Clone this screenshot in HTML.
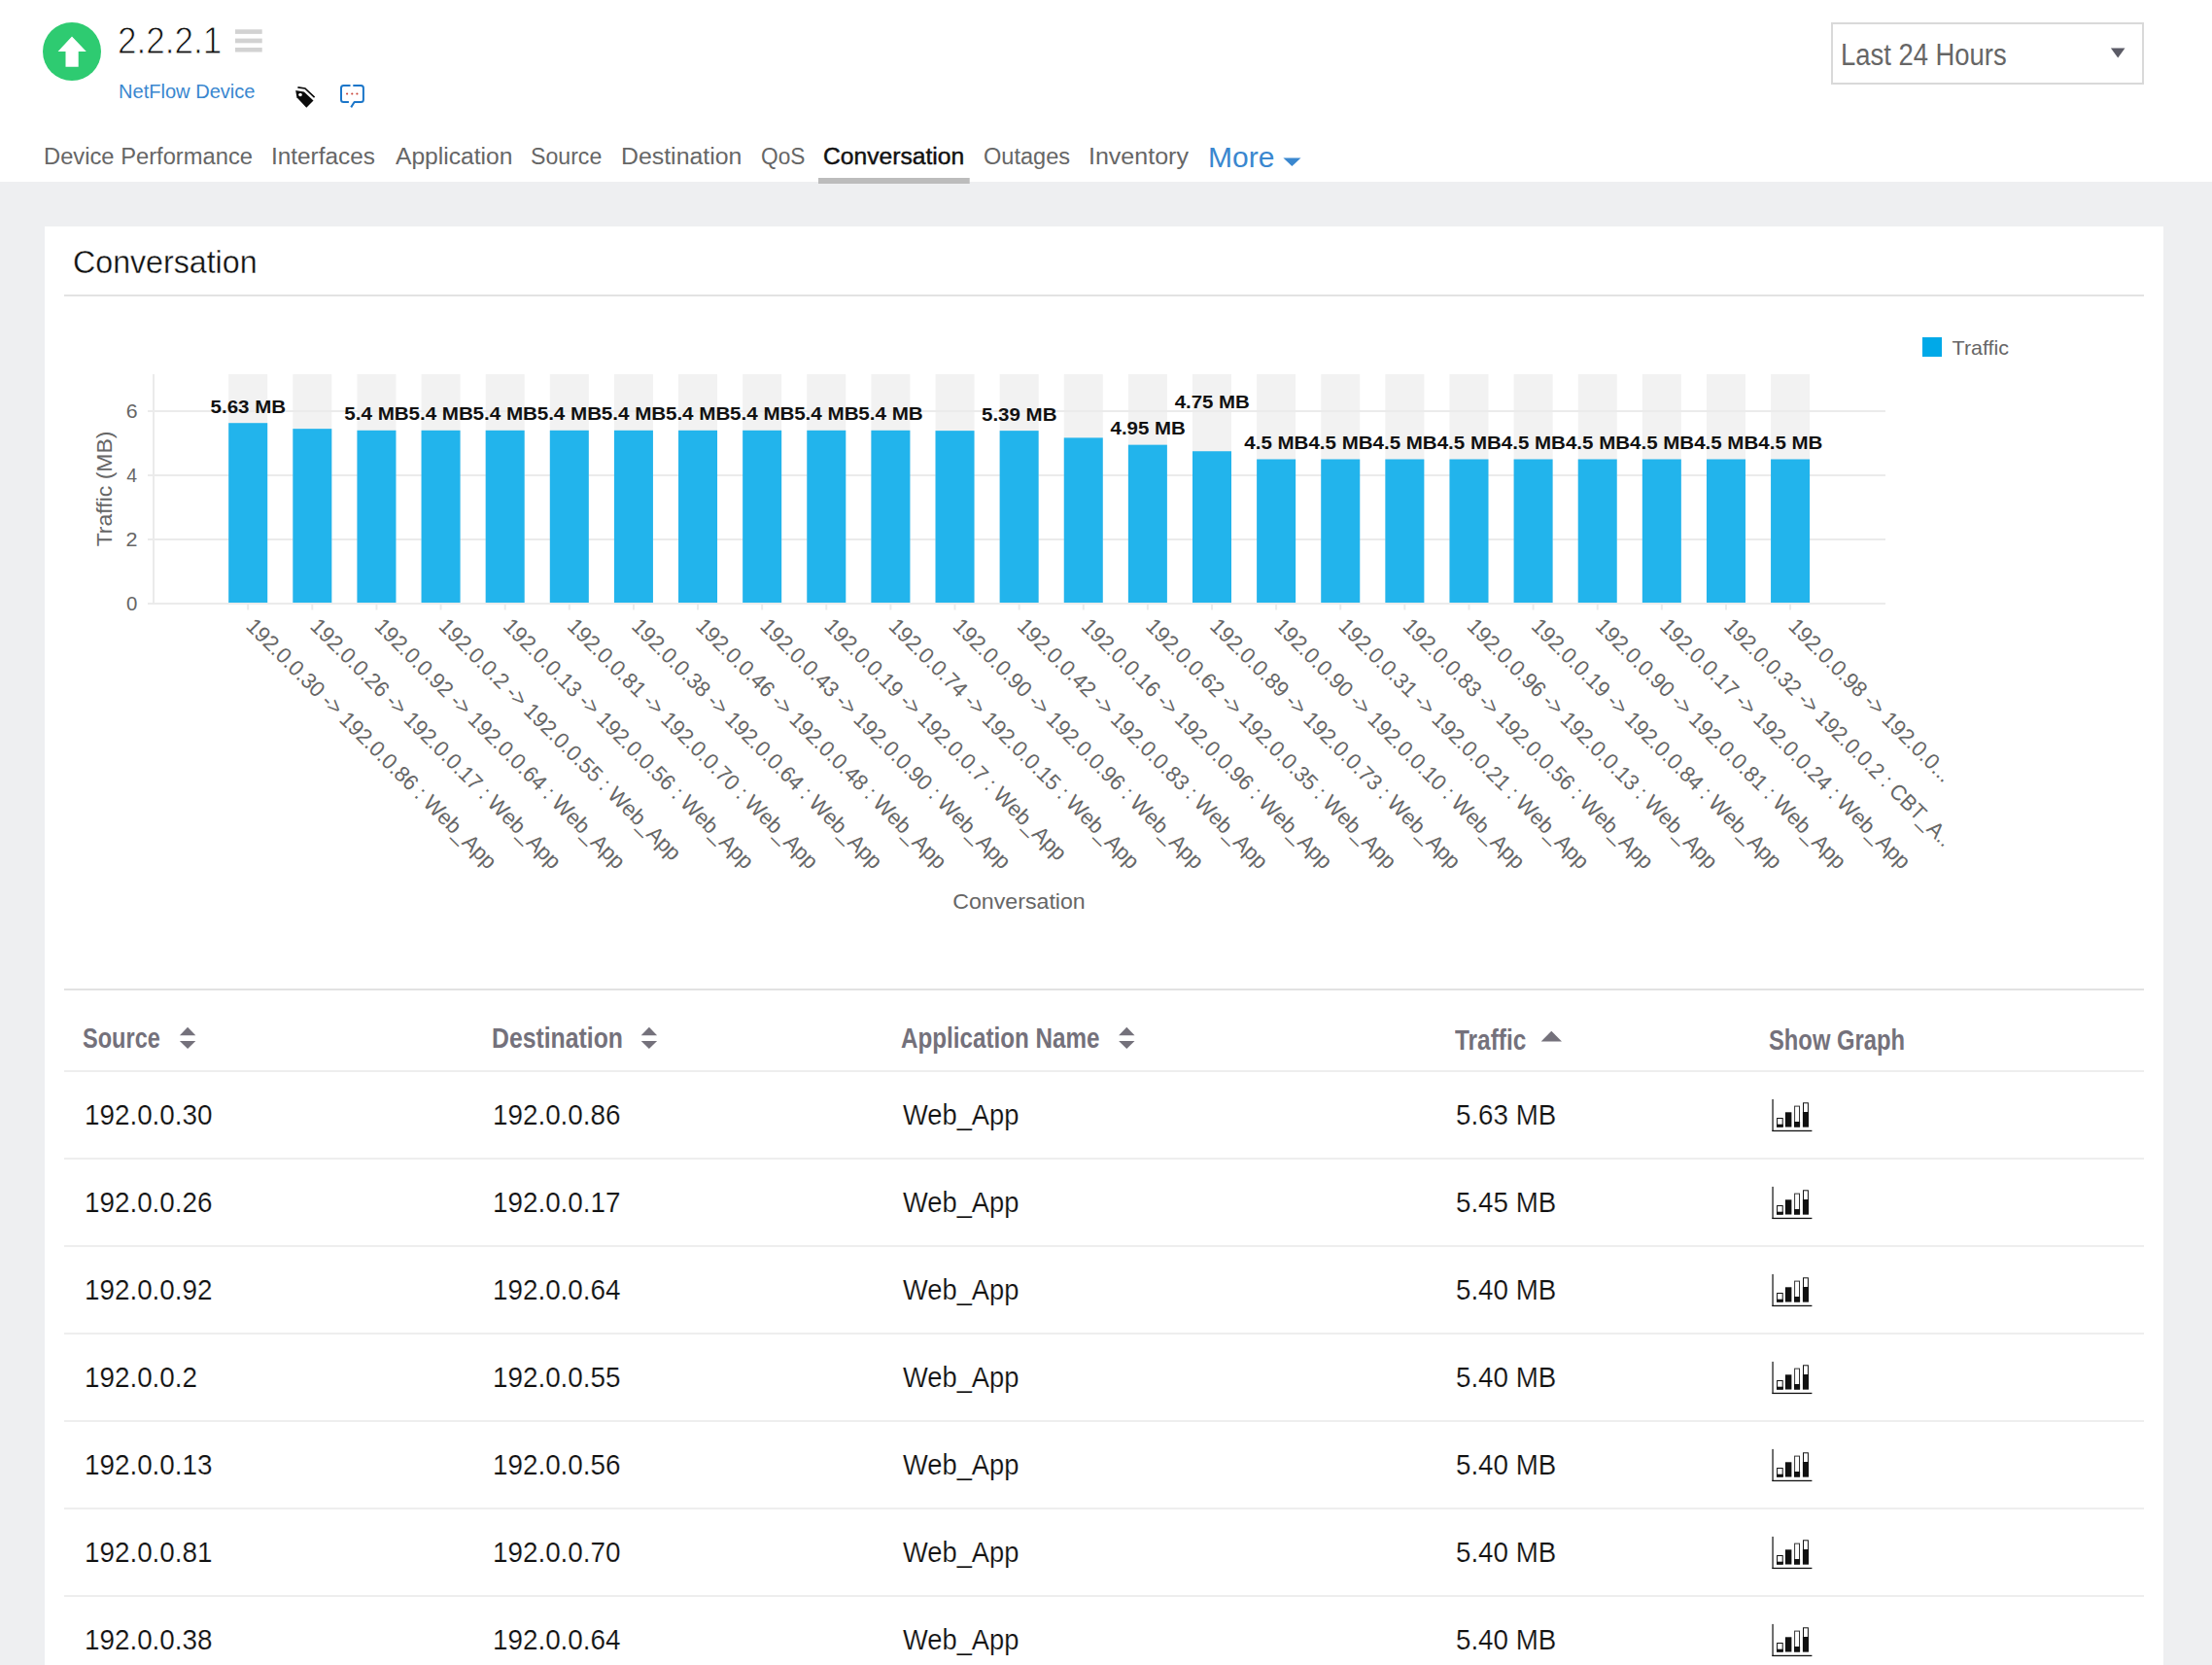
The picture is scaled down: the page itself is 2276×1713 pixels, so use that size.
<!DOCTYPE html>
<html lang="en">
<head>
<meta charset="utf-8">
<title>2.2.2.1 - Conversation</title>
<style>
html,body{margin:0;padding:0;}
body{width:2276px;height:1713px;overflow:hidden;background:#eeeff1;font-family:"Liberation Sans", sans-serif;position:relative;}
.t{position:absolute;white-space:nowrap;line-height:1;transform-origin:0 0;display:block;}
.abs{position:absolute;}
#hdr{position:absolute;left:0;top:0;width:2276px;height:187px;background:#fff;}
#card{position:absolute;left:46px;top:233px;width:2180px;height:1480px;background:#fff;}
.hl{position:absolute;left:66px;width:2140px;height:2px;background:#eeeeee;}
svg{position:absolute;left:0;top:0;overflow:visible;}
svg text{font-family:"Liberation Sans", sans-serif;}
</style>
</head>
<body>

<div id="hdr"></div>
<svg width="2276" height="190" viewBox="0 0 2276 190">
<circle cx="74" cy="53" r="30" fill="#2ecb71"/>
<path d="M74 37.5 L88.8 53 L80.7 53 L80.7 68.8 L67.5 68.8 L67.5 53 L59.6 53 Z" fill="#fff"/>
<rect x="242" y="30.3" width="27.7" height="4.6" fill="#d2d2d2"/>
<rect x="242" y="39.6" width="27.7" height="4.7" fill="#d2d2d2"/>
<rect x="242" y="49.0" width="27.7" height="4.5" fill="#d2d2d2"/>
<path d="M304.2 93 L312.9 94.4 L322.5 103.4 L315.3 110.7 L305.4 100.3 Z" fill="#0b0b0b"/>
<circle cx="309" cy="97.5" r="1.8" fill="#fff"/>
<path d="M306.4 89.8 L313.9 91 L323.6 100.2" fill="none" stroke="#0b0b0b" stroke-width="1.7"/>
<path d="M360.5 87.9 L353.5 87.9 Q351 87.9 351 90.4 L351 102.5 Q351 105 353.5 105 L358.9 105 M363.3 87.9 L371.4 87.9 Q373.9 87.9 373.9 90.4 L373.9 102.5 Q373.9 105 371.4 105 L364.6 105 L361.2 110.4" fill="none" stroke="#1b76c9" stroke-width="2" stroke-linejoin="round"/>
<circle cx="357.1" cy="96.5" r="1.1" fill="#c8453a"/>
<circle cx="362.3" cy="96.5" r="1.1" fill="#c8453a"/>
<circle cx="367.4" cy="96.5" r="1.1" fill="#c8453a"/>
<rect x="1885" y="24" width="320" height="62" fill="#fff" stroke="#d9d9d9" stroke-width="2"/>
<path d="M2171.9 49.5 L2186.5 49.5 L2179.2 59.4 Z" fill="#5b5b66"/>
<path d="M1320.4 162.6 L1338.5 162.6 L1329.4 171 Z" fill="#3a87cf"/>
<rect x="842" y="183" width="155.7" height="6" fill="#bcbcbc"/>
</svg>
<span class="t" style="left:121.04px;top:23.00px;font-size:38.60px;color:#111;transform:scaleX(0.9096);-webkit-text-stroke:0.9px #fff;">2.2.2.1</span>
<span class="t" style="left:122.09px;top:85.00px;font-size:19.60px;color:#3a87cf;transform:scaleX(1.0240);">NetFlow Device</span>
<span class="t" style="left:1893.51px;top:41.00px;font-size:30.60px;color:#666;transform:scaleX(0.8963);">Last 24 Hours</span>
<span class="t" style="left:45.30px;top:149.00px;font-size:24.70px;color:#666;transform:scaleX(0.9612);">Device Performance</span>
<span class="t" style="left:279.21px;top:149.00px;font-size:24.70px;color:#666;transform:scaleX(0.9860);">Interfaces</span>
<span class="t" style="left:406.90px;top:149.00px;font-size:24.70px;color:#666;transform:scaleX(0.9973);">Application</span>
<span class="t" style="left:546.16px;top:149.00px;font-size:24.70px;color:#666;transform:scaleX(0.9365);">Source</span>
<span class="t" style="left:639.01px;top:149.00px;font-size:24.70px;color:#666;transform:scaleX(1.0068);">Destination</span>
<span class="t" style="left:782.88px;top:149.00px;font-size:24.70px;color:#666;transform:scaleX(0.9201);">QoS</span>
<span class="t" style="left:1012.24px;top:149.00px;font-size:24.70px;color:#666;transform:scaleX(0.9541);">Outages</span>
<span class="t" style="left:1120.05px;top:149.00px;font-size:24.70px;color:#666;transform:scaleX(1.0133);">Inventory</span>
<span class="t" style="left:847.27px;top:149.00px;font-size:24.70px;color:#111;transform:scaleX(0.9980);-webkit-text-stroke:0.45px #111;">Conversation</span>
<span class="t" style="left:1243.00px;top:148.00px;font-size:29.00px;color:#3a87cf;transform:scaleX(1.0342);">More</span>
<div id="card"></div>
<span class="t" style="left:75.29px;top:253.00px;font-size:33.80px;color:#111;transform:scaleX(0.9519);-webkit-text-stroke:0.35px #fff;">Conversation</span>
<div class="hl" style="top:303px;background:#e3e3e3"></div>
<svg width="2276" height="1000" viewBox="0 0 2276 1000">
<rect x="235.20" y="385" width="40" height="236.0" fill="#f2f2f2"/>
<rect x="301.32" y="385" width="40" height="236.0" fill="#f2f2f2"/>
<rect x="367.44" y="385" width="40" height="236.0" fill="#f2f2f2"/>
<rect x="433.56" y="385" width="40" height="236.0" fill="#f2f2f2"/>
<rect x="499.68" y="385" width="40" height="236.0" fill="#f2f2f2"/>
<rect x="565.80" y="385" width="40" height="236.0" fill="#f2f2f2"/>
<rect x="631.92" y="385" width="40" height="236.0" fill="#f2f2f2"/>
<rect x="698.04" y="385" width="40" height="236.0" fill="#f2f2f2"/>
<rect x="764.16" y="385" width="40" height="236.0" fill="#f2f2f2"/>
<rect x="830.28" y="385" width="40" height="236.0" fill="#f2f2f2"/>
<rect x="896.40" y="385" width="40" height="236.0" fill="#f2f2f2"/>
<rect x="962.52" y="385" width="40" height="236.0" fill="#f2f2f2"/>
<rect x="1028.64" y="385" width="40" height="236.0" fill="#f2f2f2"/>
<rect x="1094.76" y="385" width="40" height="236.0" fill="#f2f2f2"/>
<rect x="1160.88" y="385" width="40" height="236.0" fill="#f2f2f2"/>
<rect x="1227.00" y="385" width="40" height="236.0" fill="#f2f2f2"/>
<rect x="1293.12" y="385" width="40" height="236.0" fill="#f2f2f2"/>
<rect x="1359.24" y="385" width="40" height="236.0" fill="#f2f2f2"/>
<rect x="1425.36" y="385" width="40" height="236.0" fill="#f2f2f2"/>
<rect x="1491.48" y="385" width="40" height="236.0" fill="#f2f2f2"/>
<rect x="1557.60" y="385" width="40" height="236.0" fill="#f2f2f2"/>
<rect x="1623.72" y="385" width="40" height="236.0" fill="#f2f2f2"/>
<rect x="1689.84" y="385" width="40" height="236.0" fill="#f2f2f2"/>
<rect x="1755.96" y="385" width="40" height="236.0" fill="#f2f2f2"/>
<rect x="1822.08" y="385" width="40" height="236.0" fill="#f2f2f2"/>
<rect x="152" y="620.00" width="1788" height="2" fill="#ebebeb"/>
<rect x="152" y="554.00" width="1788" height="2" fill="#ebebeb"/>
<rect x="152" y="488.00" width="1788" height="2" fill="#ebebeb"/>
<rect x="152" y="422.00" width="1788" height="2" fill="#ebebeb"/>
<rect x="157" y="385" width="2" height="237.0" fill="#ebebeb"/>
<rect x="235.20" y="435.21" width="40" height="184.79" fill="#22b4ec"/>
<rect x="301.32" y="441.15" width="40" height="178.85" fill="#22b4ec"/>
<rect x="367.44" y="442.80" width="40" height="177.20" fill="#22b4ec"/>
<rect x="433.56" y="442.80" width="40" height="177.20" fill="#22b4ec"/>
<rect x="499.68" y="442.80" width="40" height="177.20" fill="#22b4ec"/>
<rect x="565.80" y="442.80" width="40" height="177.20" fill="#22b4ec"/>
<rect x="631.92" y="442.80" width="40" height="177.20" fill="#22b4ec"/>
<rect x="698.04" y="442.80" width="40" height="177.20" fill="#22b4ec"/>
<rect x="764.16" y="442.80" width="40" height="177.20" fill="#22b4ec"/>
<rect x="830.28" y="442.80" width="40" height="177.20" fill="#22b4ec"/>
<rect x="896.40" y="442.80" width="40" height="177.20" fill="#22b4ec"/>
<rect x="962.52" y="443.13" width="40" height="176.87" fill="#22b4ec"/>
<rect x="1028.64" y="443.13" width="40" height="176.87" fill="#22b4ec"/>
<rect x="1094.76" y="450.39" width="40" height="169.61" fill="#22b4ec"/>
<rect x="1160.88" y="457.65" width="40" height="162.35" fill="#22b4ec"/>
<rect x="1227.00" y="464.25" width="40" height="155.75" fill="#22b4ec"/>
<rect x="1293.12" y="472.50" width="40" height="147.50" fill="#22b4ec"/>
<rect x="1359.24" y="472.50" width="40" height="147.50" fill="#22b4ec"/>
<rect x="1425.36" y="472.50" width="40" height="147.50" fill="#22b4ec"/>
<rect x="1491.48" y="472.50" width="40" height="147.50" fill="#22b4ec"/>
<rect x="1557.60" y="472.50" width="40" height="147.50" fill="#22b4ec"/>
<rect x="1623.72" y="472.50" width="40" height="147.50" fill="#22b4ec"/>
<rect x="1689.84" y="472.50" width="40" height="147.50" fill="#22b4ec"/>
<rect x="1755.96" y="472.50" width="40" height="147.50" fill="#22b4ec"/>
<rect x="1822.08" y="472.50" width="40" height="147.50" fill="#22b4ec"/>
<rect x="254.20" y="622.0" width="2" height="5.5" fill="#ebebeb"/>
<rect x="320.32" y="622.0" width="2" height="5.5" fill="#ebebeb"/>
<rect x="386.44" y="622.0" width="2" height="5.5" fill="#ebebeb"/>
<rect x="452.56" y="622.0" width="2" height="5.5" fill="#ebebeb"/>
<rect x="518.68" y="622.0" width="2" height="5.5" fill="#ebebeb"/>
<rect x="584.80" y="622.0" width="2" height="5.5" fill="#ebebeb"/>
<rect x="650.92" y="622.0" width="2" height="5.5" fill="#ebebeb"/>
<rect x="717.04" y="622.0" width="2" height="5.5" fill="#ebebeb"/>
<rect x="783.16" y="622.0" width="2" height="5.5" fill="#ebebeb"/>
<rect x="849.28" y="622.0" width="2" height="5.5" fill="#ebebeb"/>
<rect x="915.40" y="622.0" width="2" height="5.5" fill="#ebebeb"/>
<rect x="981.52" y="622.0" width="2" height="5.5" fill="#ebebeb"/>
<rect x="1047.64" y="622.0" width="2" height="5.5" fill="#ebebeb"/>
<rect x="1113.76" y="622.0" width="2" height="5.5" fill="#ebebeb"/>
<rect x="1179.88" y="622.0" width="2" height="5.5" fill="#ebebeb"/>
<rect x="1246.00" y="622.0" width="2" height="5.5" fill="#ebebeb"/>
<rect x="1312.12" y="622.0" width="2" height="5.5" fill="#ebebeb"/>
<rect x="1378.24" y="622.0" width="2" height="5.5" fill="#ebebeb"/>
<rect x="1444.36" y="622.0" width="2" height="5.5" fill="#ebebeb"/>
<rect x="1510.48" y="622.0" width="2" height="5.5" fill="#ebebeb"/>
<rect x="1576.60" y="622.0" width="2" height="5.5" fill="#ebebeb"/>
<rect x="1642.72" y="622.0" width="2" height="5.5" fill="#ebebeb"/>
<rect x="1708.84" y="622.0" width="2" height="5.5" fill="#ebebeb"/>
<rect x="1774.96" y="622.0" width="2" height="5.5" fill="#ebebeb"/>
<rect x="1841.08" y="622.0" width="2" height="5.5" fill="#ebebeb"/>
<text transform="translate(129.99 628.20) scale(1.0414 1)" font-size="19.60" fill="#666">0</text>
<text transform="translate(129.62 562.20) scale(1.0980 1)" font-size="19.60" fill="#666">2</text>
<text transform="translate(130.31 496.20) scale(0.9904 1)" font-size="19.60" fill="#666">4</text>
<text transform="translate(129.64 430.20) scale(1.0862 1)" font-size="19.60" fill="#666">6</text>
<g transform="translate(115.1 561.9) rotate(-90)"><text transform="translate(-0.46 0.00) scale(1.0274 1)" font-size="22.40" fill="#666">Traffic (MB)</text></g>
<text transform="translate(980.24 935.00) scale(1.0348 1)" font-size="22.40" fill="#666">Conversation</text>
<rect x="1978" y="347" width="20" height="20" fill="#00a9e8"/>
<text transform="translate(2008.57 364.50) scale(1.0956 1)" font-size="19.60" fill="#666">Traffic</text>
<text transform="translate(216.53 424.60) scale(1.0748 1)" font-size="19.10" fill="#111" font-weight="bold">5.63 MB</text>
<text transform="translate(354.32 431.90) scale(1.0800 1)" font-size="19.10" fill="#111" font-weight="bold">5.4 MB</text>
<text transform="translate(420.44 431.90) scale(1.0800 1)" font-size="19.10" fill="#111" font-weight="bold">5.4 MB</text>
<text transform="translate(486.56 431.90) scale(1.0800 1)" font-size="19.10" fill="#111" font-weight="bold">5.4 MB</text>
<text transform="translate(552.68 431.90) scale(1.0800 1)" font-size="19.10" fill="#111" font-weight="bold">5.4 MB</text>
<text transform="translate(618.80 431.90) scale(1.0800 1)" font-size="19.10" fill="#111" font-weight="bold">5.4 MB</text>
<text transform="translate(684.92 431.90) scale(1.0800 1)" font-size="19.10" fill="#111" font-weight="bold">5.4 MB</text>
<text transform="translate(751.04 431.90) scale(1.0800 1)" font-size="19.10" fill="#111" font-weight="bold">5.4 MB</text>
<text transform="translate(817.16 431.90) scale(1.0800 1)" font-size="19.10" fill="#111" font-weight="bold">5.4 MB</text>
<text transform="translate(883.28 431.90) scale(1.0800 1)" font-size="19.10" fill="#111" font-weight="bold">5.4 MB</text>
<text transform="translate(1009.97 433.00) scale(1.0748 1)" font-size="19.10" fill="#111" font-weight="bold">5.39 MB</text>
<text transform="translate(1142.52 447.30) scale(1.0704 1)" font-size="19.10" fill="#111" font-weight="bold">4.95 MB</text>
<text transform="translate(1208.64 420.00) scale(1.0704 1)" font-size="19.10" fill="#111" font-weight="bold">4.75 MB</text>
<text transform="translate(1280.31 462.00) scale(1.0749 1)" font-size="19.10" fill="#111" font-weight="bold">4.5 MB</text>
<text transform="translate(1346.43 462.00) scale(1.0749 1)" font-size="19.10" fill="#111" font-weight="bold">4.5 MB</text>
<text transform="translate(1412.55 462.00) scale(1.0749 1)" font-size="19.10" fill="#111" font-weight="bold">4.5 MB</text>
<text transform="translate(1478.67 462.00) scale(1.0749 1)" font-size="19.10" fill="#111" font-weight="bold">4.5 MB</text>
<text transform="translate(1544.79 462.00) scale(1.0749 1)" font-size="19.10" fill="#111" font-weight="bold">4.5 MB</text>
<text transform="translate(1610.91 462.00) scale(1.0749 1)" font-size="19.10" fill="#111" font-weight="bold">4.5 MB</text>
<text transform="translate(1677.03 462.00) scale(1.0749 1)" font-size="19.10" fill="#111" font-weight="bold">4.5 MB</text>
<text transform="translate(1743.15 462.00) scale(1.0749 1)" font-size="19.10" fill="#111" font-weight="bold">4.5 MB</text>
<text transform="translate(1809.27 462.00) scale(1.0749 1)" font-size="19.10" fill="#111" font-weight="bold">4.5 MB</text>
<text transform="translate(252.00 645.40) rotate(45) scale(0.9741 1)" font-size="22.5" fill="#666">192.0.0.30 -&gt; 192.0.0.86 : Web_App</text>
<text transform="translate(318.12 645.40) rotate(45) scale(0.9741 1)" font-size="22.5" fill="#666">192.0.0.26 -&gt; 192.0.0.17 : Web_App</text>
<text transform="translate(384.24 645.40) rotate(45) scale(0.9741 1)" font-size="22.5" fill="#666">192.0.0.92 -&gt; 192.0.0.64 : Web_App</text>
<text transform="translate(450.36 645.40) rotate(45) scale(0.9741 1)" font-size="22.5" fill="#666">192.0.0.2 -&gt; 192.0.0.55 : Web_App</text>
<text transform="translate(516.48 645.40) rotate(45) scale(0.9741 1)" font-size="22.5" fill="#666">192.0.0.13 -&gt; 192.0.0.56 : Web_App</text>
<text transform="translate(582.60 645.40) rotate(45) scale(0.9741 1)" font-size="22.5" fill="#666">192.0.0.81 -&gt; 192.0.0.70 : Web_App</text>
<text transform="translate(648.72 645.40) rotate(45) scale(0.9741 1)" font-size="22.5" fill="#666">192.0.0.38 -&gt; 192.0.0.64 : Web_App</text>
<text transform="translate(714.84 645.40) rotate(45) scale(0.9741 1)" font-size="22.5" fill="#666">192.0.0.46 -&gt; 192.0.0.48 : Web_App</text>
<text transform="translate(780.96 645.40) rotate(45) scale(0.9741 1)" font-size="22.5" fill="#666">192.0.0.43 -&gt; 192.0.0.90 : Web_App</text>
<text transform="translate(847.08 645.40) rotate(45) scale(0.9741 1)" font-size="22.5" fill="#666">192.0.0.19 -&gt; 192.0.0.7 : Web_App</text>
<text transform="translate(913.20 645.40) rotate(45) scale(0.9741 1)" font-size="22.5" fill="#666">192.0.0.74 -&gt; 192.0.0.15 : Web_App</text>
<text transform="translate(979.32 645.40) rotate(45) scale(0.9741 1)" font-size="22.5" fill="#666">192.0.0.90 -&gt; 192.0.0.96 : Web_App</text>
<text transform="translate(1045.44 645.40) rotate(45) scale(0.9741 1)" font-size="22.5" fill="#666">192.0.0.42 -&gt; 192.0.0.83 : Web_App</text>
<text transform="translate(1111.56 645.40) rotate(45) scale(0.9741 1)" font-size="22.5" fill="#666">192.0.0.16 -&gt; 192.0.0.96 : Web_App</text>
<text transform="translate(1177.68 645.40) rotate(45) scale(0.9741 1)" font-size="22.5" fill="#666">192.0.0.62 -&gt; 192.0.0.35 : Web_App</text>
<text transform="translate(1243.80 645.40) rotate(45) scale(0.9741 1)" font-size="22.5" fill="#666">192.0.0.89 -&gt; 192.0.0.73 : Web_App</text>
<text transform="translate(1309.92 645.40) rotate(45) scale(0.9741 1)" font-size="22.5" fill="#666">192.0.0.90 -&gt; 192.0.0.10 : Web_App</text>
<text transform="translate(1376.04 645.40) rotate(45) scale(0.9741 1)" font-size="22.5" fill="#666">192.0.0.31 -&gt; 192.0.0.21 : Web_App</text>
<text transform="translate(1442.16 645.40) rotate(45) scale(0.9741 1)" font-size="22.5" fill="#666">192.0.0.83 -&gt; 192.0.0.56 : Web_App</text>
<text transform="translate(1508.28 645.40) rotate(45) scale(0.9741 1)" font-size="22.5" fill="#666">192.0.0.96 -&gt; 192.0.0.13 : Web_App</text>
<text transform="translate(1574.40 645.40) rotate(45) scale(0.9741 1)" font-size="22.5" fill="#666">192.0.0.19 -&gt; 192.0.0.84 : Web_App</text>
<text transform="translate(1640.52 645.40) rotate(45) scale(0.9741 1)" font-size="22.5" fill="#666">192.0.0.90 -&gt; 192.0.0.81 : Web_App</text>
<text transform="translate(1706.64 645.40) rotate(45) scale(0.9741 1)" font-size="22.5" fill="#666">192.0.0.17 -&gt; 192.0.0.24 : Web_App</text>
<text transform="translate(1772.76 645.40) rotate(45) scale(0.9534 1)" font-size="22.5" fill="#666">192.0.0.32 -&gt; 192.0.0.2 : CBT_A..</text>
<text transform="translate(1838.88 645.40) rotate(45) scale(0.9741 1)" font-size="22.5" fill="#666">192.0.0.98 -&gt; 192.0.0...</text>
</svg>
<div class="hl" style="top:1017px;background:#e2e2e2"></div>
<div class="hl" style="top:1101px"></div>
<div class="hl" style="top:1191px"></div>
<div class="hl" style="top:1281px"></div>
<div class="hl" style="top:1371px"></div>
<div class="hl" style="top:1461px"></div>
<div class="hl" style="top:1551px"></div>
<div class="hl" style="top:1641px"></div>
<div class="hl" style="top:1731px"></div>
<span class="t" style="left:85.41px;top:1054.00px;font-size:29.00px;color:#74717b;font-weight:bold;transform:scaleX(0.8119);">Source</span>
<span class="t" style="left:505.59px;top:1054.00px;font-size:29.00px;color:#74717b;font-weight:bold;transform:scaleX(0.8545);">Destination</span>
<span class="t" style="left:927.22px;top:1054.00px;font-size:29.00px;color:#74717b;font-weight:bold;transform:scaleX(0.8347);">Application Name</span>
<span class="t" style="left:1497.46px;top:1056.00px;font-size:29.00px;color:#74717b;font-weight:bold;transform:scaleX(0.8421);">Traffic</span>
<span class="t" style="left:1819.71px;top:1056.00px;font-size:29.00px;color:#74717b;font-weight:bold;transform:scaleX(0.8194);">Show Graph</span>
<svg width="2276" height="1713" viewBox="0 0 2276 1713" style="pointer-events:none">
<path d="M184.9 1065.2 L201.3 1065.2 L193.1 1056.7 Z M184.9 1070.9 L201.3 1070.9 L193.1 1079 Z" fill="#74717b"/>
<path d="M659.7 1065.2 L676.1 1065.2 L667.9 1056.7 Z M659.7 1070.9 L676.1 1070.9 L667.9 1079 Z" fill="#74717b"/>
<path d="M1151.1 1065.2 L1167.5 1065.2 L1159.3 1056.7 Z M1151.1 1070.9 L1167.5 1070.9 L1159.3 1079 Z" fill="#74717b"/>
<path d="M1585.7 1071.5 L1607 1071.5 L1596.3 1060.8 Z" fill="#74717b"/>
<g transform="translate(0 0)"><rect x="1823.4" y="1130.9" width="1.3" height="33" fill="#222"/><rect x="1823.4" y="1162.8" width="41" height="1.3" fill="#111"/><rect x="1828.6" y="1150.5" width="5.6" height="8.6" fill="#fff" stroke="#111" stroke-width="1"/><rect x="1828" y="1156.7" width="6.8" height="2.9" fill="#111"/><rect x="1836.9" y="1144.3" width="6.5" height="15.2" fill="#111"/><rect x="1846.6" y="1138.1" width="4.9" height="21" fill="#fff" stroke="#333" stroke-width="1"/><rect x="1846" y="1154" width="6.1" height="5.5" fill="#111"/><rect x="1855.5" y="1134.8" width="4.9" height="24" fill="#fff" stroke="#111" stroke-width="1"/><rect x="1854.9" y="1144" width="6.1" height="15.5" fill="#111"/></g>
<g transform="translate(0 90)"><rect x="1823.4" y="1130.9" width="1.3" height="33" fill="#222"/><rect x="1823.4" y="1162.8" width="41" height="1.3" fill="#111"/><rect x="1828.6" y="1150.5" width="5.6" height="8.6" fill="#fff" stroke="#111" stroke-width="1"/><rect x="1828" y="1156.7" width="6.8" height="2.9" fill="#111"/><rect x="1836.9" y="1144.3" width="6.5" height="15.2" fill="#111"/><rect x="1846.6" y="1138.1" width="4.9" height="21" fill="#fff" stroke="#333" stroke-width="1"/><rect x="1846" y="1154" width="6.1" height="5.5" fill="#111"/><rect x="1855.5" y="1134.8" width="4.9" height="24" fill="#fff" stroke="#111" stroke-width="1"/><rect x="1854.9" y="1144" width="6.1" height="15.5" fill="#111"/></g>
<g transform="translate(0 180)"><rect x="1823.4" y="1130.9" width="1.3" height="33" fill="#222"/><rect x="1823.4" y="1162.8" width="41" height="1.3" fill="#111"/><rect x="1828.6" y="1150.5" width="5.6" height="8.6" fill="#fff" stroke="#111" stroke-width="1"/><rect x="1828" y="1156.7" width="6.8" height="2.9" fill="#111"/><rect x="1836.9" y="1144.3" width="6.5" height="15.2" fill="#111"/><rect x="1846.6" y="1138.1" width="4.9" height="21" fill="#fff" stroke="#333" stroke-width="1"/><rect x="1846" y="1154" width="6.1" height="5.5" fill="#111"/><rect x="1855.5" y="1134.8" width="4.9" height="24" fill="#fff" stroke="#111" stroke-width="1"/><rect x="1854.9" y="1144" width="6.1" height="15.5" fill="#111"/></g>
<g transform="translate(0 270)"><rect x="1823.4" y="1130.9" width="1.3" height="33" fill="#222"/><rect x="1823.4" y="1162.8" width="41" height="1.3" fill="#111"/><rect x="1828.6" y="1150.5" width="5.6" height="8.6" fill="#fff" stroke="#111" stroke-width="1"/><rect x="1828" y="1156.7" width="6.8" height="2.9" fill="#111"/><rect x="1836.9" y="1144.3" width="6.5" height="15.2" fill="#111"/><rect x="1846.6" y="1138.1" width="4.9" height="21" fill="#fff" stroke="#333" stroke-width="1"/><rect x="1846" y="1154" width="6.1" height="5.5" fill="#111"/><rect x="1855.5" y="1134.8" width="4.9" height="24" fill="#fff" stroke="#111" stroke-width="1"/><rect x="1854.9" y="1144" width="6.1" height="15.5" fill="#111"/></g>
<g transform="translate(0 360)"><rect x="1823.4" y="1130.9" width="1.3" height="33" fill="#222"/><rect x="1823.4" y="1162.8" width="41" height="1.3" fill="#111"/><rect x="1828.6" y="1150.5" width="5.6" height="8.6" fill="#fff" stroke="#111" stroke-width="1"/><rect x="1828" y="1156.7" width="6.8" height="2.9" fill="#111"/><rect x="1836.9" y="1144.3" width="6.5" height="15.2" fill="#111"/><rect x="1846.6" y="1138.1" width="4.9" height="21" fill="#fff" stroke="#333" stroke-width="1"/><rect x="1846" y="1154" width="6.1" height="5.5" fill="#111"/><rect x="1855.5" y="1134.8" width="4.9" height="24" fill="#fff" stroke="#111" stroke-width="1"/><rect x="1854.9" y="1144" width="6.1" height="15.5" fill="#111"/></g>
<g transform="translate(0 450)"><rect x="1823.4" y="1130.9" width="1.3" height="33" fill="#222"/><rect x="1823.4" y="1162.8" width="41" height="1.3" fill="#111"/><rect x="1828.6" y="1150.5" width="5.6" height="8.6" fill="#fff" stroke="#111" stroke-width="1"/><rect x="1828" y="1156.7" width="6.8" height="2.9" fill="#111"/><rect x="1836.9" y="1144.3" width="6.5" height="15.2" fill="#111"/><rect x="1846.6" y="1138.1" width="4.9" height="21" fill="#fff" stroke="#333" stroke-width="1"/><rect x="1846" y="1154" width="6.1" height="5.5" fill="#111"/><rect x="1855.5" y="1134.8" width="4.9" height="24" fill="#fff" stroke="#111" stroke-width="1"/><rect x="1854.9" y="1144" width="6.1" height="15.5" fill="#111"/></g>
<g transform="translate(0 540)"><rect x="1823.4" y="1130.9" width="1.3" height="33" fill="#222"/><rect x="1823.4" y="1162.8" width="41" height="1.3" fill="#111"/><rect x="1828.6" y="1150.5" width="5.6" height="8.6" fill="#fff" stroke="#111" stroke-width="1"/><rect x="1828" y="1156.7" width="6.8" height="2.9" fill="#111"/><rect x="1836.9" y="1144.3" width="6.5" height="15.2" fill="#111"/><rect x="1846.6" y="1138.1" width="4.9" height="21" fill="#fff" stroke="#333" stroke-width="1"/><rect x="1846" y="1154" width="6.1" height="5.5" fill="#111"/><rect x="1855.5" y="1134.8" width="4.9" height="24" fill="#fff" stroke="#111" stroke-width="1"/><rect x="1854.9" y="1144" width="6.1" height="15.5" fill="#111"/></g>
</svg>
<span class="t" style="left:86.61px;top:1132.00px;font-size:30.00px;color:#111;transform:scaleX(0.9273);-webkit-text-stroke:0.2px #fff;">192.0.0.30</span>
<span class="t" style="left:506.61px;top:1132.00px;font-size:30.00px;color:#111;transform:scaleX(0.9273);-webkit-text-stroke:0.2px #fff;">192.0.0.86</span>
<span class="t" style="left:928.70px;top:1132.00px;font-size:30.00px;color:#111;transform:scaleX(0.9102);-webkit-text-stroke:0.2px #fff;">Web_App</span>
<span class="t" style="left:1498.49px;top:1132.00px;font-size:30.00px;color:#111;transform:scaleX(0.9242);-webkit-text-stroke:0.2px #fff;">5.63 MB</span>
<span class="t" style="left:86.61px;top:1222.00px;font-size:30.00px;color:#111;transform:scaleX(0.9273);-webkit-text-stroke:0.2px #fff;">192.0.0.26</span>
<span class="t" style="left:506.61px;top:1222.00px;font-size:30.00px;color:#111;transform:scaleX(0.9273);-webkit-text-stroke:0.2px #fff;">192.0.0.17</span>
<span class="t" style="left:928.70px;top:1222.00px;font-size:30.00px;color:#111;transform:scaleX(0.9102);-webkit-text-stroke:0.2px #fff;">Web_App</span>
<span class="t" style="left:1498.49px;top:1222.00px;font-size:30.00px;color:#111;transform:scaleX(0.9242);-webkit-text-stroke:0.2px #fff;">5.45 MB</span>
<span class="t" style="left:86.61px;top:1312.00px;font-size:30.00px;color:#111;transform:scaleX(0.9273);-webkit-text-stroke:0.2px #fff;">192.0.0.92</span>
<span class="t" style="left:506.61px;top:1312.00px;font-size:30.00px;color:#111;transform:scaleX(0.9273);-webkit-text-stroke:0.2px #fff;">192.0.0.64</span>
<span class="t" style="left:928.70px;top:1312.00px;font-size:30.00px;color:#111;transform:scaleX(0.9102);-webkit-text-stroke:0.2px #fff;">Web_App</span>
<span class="t" style="left:1498.49px;top:1312.00px;font-size:30.00px;color:#111;transform:scaleX(0.9242);-webkit-text-stroke:0.2px #fff;">5.40 MB</span>
<span class="t" style="left:86.61px;top:1402.00px;font-size:30.00px;color:#111;transform:scaleX(0.9273);-webkit-text-stroke:0.2px #fff;">192.0.0.2</span>
<span class="t" style="left:506.61px;top:1402.00px;font-size:30.00px;color:#111;transform:scaleX(0.9273);-webkit-text-stroke:0.2px #fff;">192.0.0.55</span>
<span class="t" style="left:928.70px;top:1402.00px;font-size:30.00px;color:#111;transform:scaleX(0.9102);-webkit-text-stroke:0.2px #fff;">Web_App</span>
<span class="t" style="left:1498.49px;top:1402.00px;font-size:30.00px;color:#111;transform:scaleX(0.9242);-webkit-text-stroke:0.2px #fff;">5.40 MB</span>
<span class="t" style="left:86.61px;top:1492.00px;font-size:30.00px;color:#111;transform:scaleX(0.9273);-webkit-text-stroke:0.2px #fff;">192.0.0.13</span>
<span class="t" style="left:506.61px;top:1492.00px;font-size:30.00px;color:#111;transform:scaleX(0.9273);-webkit-text-stroke:0.2px #fff;">192.0.0.56</span>
<span class="t" style="left:928.70px;top:1492.00px;font-size:30.00px;color:#111;transform:scaleX(0.9102);-webkit-text-stroke:0.2px #fff;">Web_App</span>
<span class="t" style="left:1498.49px;top:1492.00px;font-size:30.00px;color:#111;transform:scaleX(0.9242);-webkit-text-stroke:0.2px #fff;">5.40 MB</span>
<span class="t" style="left:86.61px;top:1582.00px;font-size:30.00px;color:#111;transform:scaleX(0.9273);-webkit-text-stroke:0.2px #fff;">192.0.0.81</span>
<span class="t" style="left:506.61px;top:1582.00px;font-size:30.00px;color:#111;transform:scaleX(0.9273);-webkit-text-stroke:0.2px #fff;">192.0.0.70</span>
<span class="t" style="left:928.70px;top:1582.00px;font-size:30.00px;color:#111;transform:scaleX(0.9102);-webkit-text-stroke:0.2px #fff;">Web_App</span>
<span class="t" style="left:1498.49px;top:1582.00px;font-size:30.00px;color:#111;transform:scaleX(0.9242);-webkit-text-stroke:0.2px #fff;">5.40 MB</span>
<span class="t" style="left:86.61px;top:1672.00px;font-size:30.00px;color:#111;transform:scaleX(0.9273);-webkit-text-stroke:0.2px #fff;">192.0.0.38</span>
<span class="t" style="left:506.61px;top:1672.00px;font-size:30.00px;color:#111;transform:scaleX(0.9273);-webkit-text-stroke:0.2px #fff;">192.0.0.64</span>
<span class="t" style="left:928.70px;top:1672.00px;font-size:30.00px;color:#111;transform:scaleX(0.9102);-webkit-text-stroke:0.2px #fff;">Web_App</span>
<span class="t" style="left:1498.49px;top:1672.00px;font-size:30.00px;color:#111;transform:scaleX(0.9242);-webkit-text-stroke:0.2px #fff;">5.40 MB</span>
</body>
</html>
